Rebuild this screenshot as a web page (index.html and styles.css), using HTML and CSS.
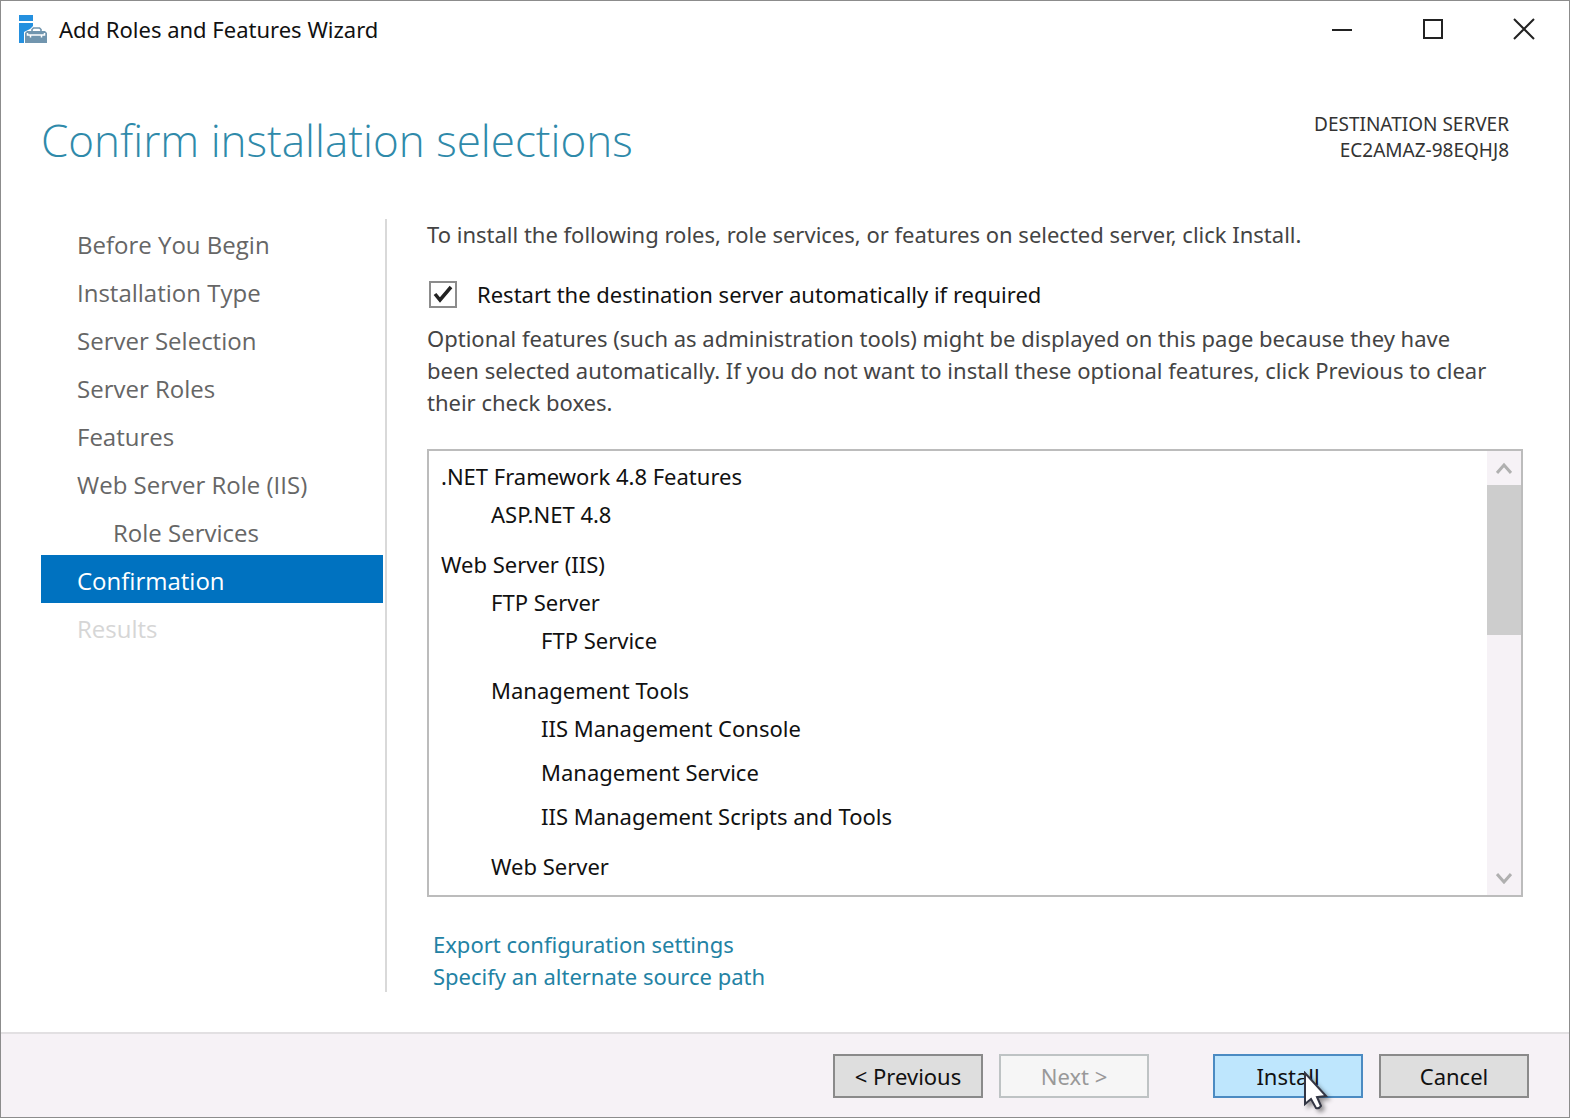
FILE: index.html
```html
<!DOCTYPE html>
<html lang="en">
<head>
<meta charset="utf-8">
<meta name="viewport" content="width=device-width, initial-scale=1">
<title>Add Roles and Features Wizard</title>
<link rel="stylesheet" href="styles.css">
</head>
<body>
<div class="window">
  <header class="titlebar">
    <svg class="app-icon" viewBox="0 0 28 28" aria-hidden="true">
      <path fill="#2490df" d="M0 0h14v6H0zM0 8h14v3l-3 3-6 3v11H0z"/>
      <path fill="none" stroke="#7195ae" stroke-width="1.600" d="M13 16v-1.500l1.500-1.500h6l1.500 1.500V16"/>
      <path fill="#7195ae" d="M6 18l2-2h18l2 2v10H6z"/>
      <path fill="none" stroke="#fff" stroke-width="1.500" d="M8.500 18v2h17v-2M11.500 20v2.500M22.500 20v2.500"/>
    </svg>
    <span class="titlebar-text">Add Roles and Features Wizard</span>
    <div class="caption-buttons">
      <button class="caption-button" type="button" aria-label="Minimize"><svg viewBox="0 0 22 22"><path d="M1 12h20"/></svg></button>
      <button class="caption-button" type="button" aria-label="Maximize"><svg viewBox="0 0 22 22"><path d="M2 2h18v18H2z"/></svg></button>
      <button class="caption-button" type="button" aria-label="Close"><svg viewBox="0 0 22 22"><path d="M1 1l20 20M21 1L1 21"/></svg></button>
    </div>
  </header>

  <div class="page-header">
    <h1 class="page-title">Confirm installation selections</h1>
    <p class="destination">DESTINATION SERVER<br>EC2AMAZ-98EQHJ8</p>
  </div>

  <div class="body">
    <nav class="steps">
      <a class="step" href="#">Before You Begin</a>
      <a class="step" href="#">Installation Type</a>
      <a class="step" href="#">Server Selection</a>
      <a class="step" href="#">Server Roles</a>
      <a class="step" href="#">Features</a>
      <a class="step" href="#">Web Server Role (IIS)</a>
      <a class="step step-nested" href="#">Role Services</a>
      <a class="step step-current" href="#" aria-current="step">Confirmation</a>
      <span class="step step-disabled">Results</span>
    </nav>

    <main class="content">
      <p class="intro">To install the following roles, role services, or features on selected server, click Install.</p>
      <label class="restart" for="restart">
        <input class="checkbox" type="checkbox" id="restart" checked>
        Restart the destination server automatically if required
      </label>
      <p class="note">Optional features (such as administration tools) might be displayed on this page because they have been selected automatically. If you do not want to install these optional features, click Previous to clear their check boxes.</p>

      <div class="selection-box">
        <ul class="selection">
          <li>.NET Framework 4.8 Features
            <ul><li>ASP.NET 4.8</li></ul>
          </li>
          <li>Web Server (IIS)
            <ul>
              <li>FTP Server
                <ul><li>FTP Service</li></ul>
              </li>
              <li>Management Tools
                <ul>
                  <li>IIS Management Console</li>
                  <li>Management Service</li>
                  <li>IIS Management Scripts and Tools</li>
                </ul>
              </li>
              <li>Web Server
                <ul><li>Common HTTP Features</li></ul>
              </li>
            </ul>
          </li>
        </ul>
        <div class="scrollbar">
          <button class="scroll-arrow" type="button" aria-label="Scroll up"><svg viewBox="0 0 16 12"><path d="M1 11l7-8 7 8"/></svg></button>
          <div class="scroll-thumb"></div>
          <button class="scroll-arrow scroll-down" type="button" aria-label="Scroll down"><svg viewBox="0 0 16 12"><path d="M1 2l7 8 7-8"/></svg></button>
        </div>
      </div>

      <div class="links">
        <a href="#">Export configuration settings</a>
        <a href="#">Specify an alternate source path</a>
      </div>
    </main>
  </div>

  <footer class="footer">
    <div class="button-pair">
      <button class="button" type="button">&lt; Previous</button>
      <button class="button" type="button" disabled>Next &gt;</button>
    </div>
    <div class="button-pair">
      <button class="button button-hot" type="button">Install
        <svg class="pointer" viewBox="0 0 28 42" aria-hidden="true"><path d="M2 2v31l6-5 5 9q3 1 5-2l-4-9 9-1z"/></svg>
      </button>
      <button class="button" type="button">Cancel</button>
    </div>
  </footer>
</div>
</body>
</html>
```
FILE: styles.css
```css
* {
  box-sizing: border-box;
}

body {
  margin: 0;
  background: #fff;
  color: #111;
  font: 22px/32px "Noto Sans", "Open Sans", sans-serif;
}

h1,
p,
ul {
  margin: 0;
  padding: 0;
}

a {
  color: inherit;
  text-decoration: none;
}

button {
  margin: 0;
  padding: 0;
  border: 0;
  background: none;
  color: inherit;
  font: inherit;
}

.window {
  display: flex;
  flex-direction: column;
  min-height: 100vh;
  border: 1px solid #8c8c8c;
}

.titlebar {
  display: flex;
  align-items: center;
  height: 56px;
  padding-left: 18px;
}

.app-icon {
  width: 28px;
  height: 28px;
  margin-right: 12px;
}

.caption-buttons {
  display: flex;
  margin-left: auto;
}

.caption-button {
  display: flex;
  align-items: center;
  justify-content: center;
  width: 91px;
  height: 56px;
}

.caption-button svg {
  width: 22px;
  height: 22px;
  fill: none;
  stroke: #222;
  stroke-width: 2;
}

.page-header {
  display: flex;
  justify-content: space-between;
  padding: 53px 60px 0 40px;
  height: 162px;
}

.page-title {
  color: #2f8aaa;
  font-family: "Open Sans", "Noto Sans", sans-serif;
  font-size: 44px;
  font-weight: 300;
  line-height: 60px;
}

.destination {
  padding-top: 1px;
  color: #333;
  font-size: 19px;
  line-height: 26px;
  text-align: right;
}

.body {
  display: flex;
  flex: 1;
  padding: 0 46px 40px 40px;
}

.steps {
  flex: none;
  width: 346px;
  padding-right: 2px;
  border-right: 2px solid #d9d9d9;
  color: #666;
  font-family: "Open Sans", "Noto Sans", sans-serif;
  font-size: 24px;
}

.step {
  display: block;
  padding: 4px 0 0 36px;
  line-height: 44px;
}

.step-nested {
  padding-left: 72px;
}

.step-current {
  background: #0072c0;
  color: #fff;
}

.step-disabled {
  color: #d6d6d6;
}

.content {
  display: flex;
  flex: 1;
  flex-direction: column;
  min-width: 0;
  margin-top: -1px;
  padding-left: 40px;
}

.intro,
.note {
  color: #444;
}

.note {
  padding-right: 24px;
}

.restart {
  display: flex;
  align-items: center;
  gap: 20px;
  margin: 28px 0 12px 2px;
}

.checkbox {
  appearance: none;
  width: 28px;
  height: 27px;
  margin: 0;
  border: 2px solid #8c8c8c;
  background: #fff;
}

.checkbox:checked {
  background: #fff url("data:image/svg+xml,%3Csvg xmlns='http://www.w3.org/2000/svg' viewBox='0 0 24 23'%3E%3Cpath d='M4 11l5 6L20 4' fill='none' stroke='%23222' stroke-width='3.500'/%3E%3C/svg%3E");
}

.selection-box {
  display: flex;
  height: 448px;
  margin-top: 31px;
  border: 2px solid #bcbcbc;
  overflow: hidden;
}

.selection {
  flex: 1;
  padding: 6px 0 0 12px;
  line-height: 38px;
}

.selection,
.selection ul {
  list-style: none;
}

.selection ul {
  padding: 0 0 6px 50px;
}

.selection li + li {
  margin-top: 6px;
}

.scrollbar {
  display: flex;
  flex-direction: column;
  width: 34px;
  background: #f6f2f6;
}

.scroll-arrow {
  display: flex;
  align-items: center;
  justify-content: center;
  height: 34px;
}

.scroll-arrow svg {
  width: 16px;
  height: 12px;
  fill: none;
  stroke: #b0b0b0;
  stroke-width: 3;
}

.scroll-thumb {
  height: 150px;
  background: #cdcdcd;
}

.scroll-down {
  margin-top: auto;
}

.links {
  display: flex;
  flex-direction: column;
  align-items: flex-start;
  padding: 31px 0 0 6px;
  color: #2382a4;
}

.footer {
  display: flex;
  justify-content: flex-end;
  gap: 64px;
  padding: 20px 40px 19px;
  border-top: 2px solid #e2e0e2;
  background: #f6f2f6;
}

.button-pair {
  display: flex;
  gap: 16px;
}

.button {
  position: relative;
  width: 150px;
  height: 44px;
  border: 2px solid #8a8a8a;
  background: #dedede;
}

.button:disabled {
  border-color: #bec3c4;
  background: #f6f6f6;
  color: #999;
}

.button-hot {
  border-color: #4b8bc2;
  background: #bee6fd;
}

.pointer {
  position: absolute;
  top: 15px;
  left: 88px;
  width: 28px;
  height: 42px;
  fill: #fff;
  stroke: #333644;
  stroke-width: 2;
  filter: drop-shadow(3px 3px 2px rgb(0 0 0 / 40%));
}
```
